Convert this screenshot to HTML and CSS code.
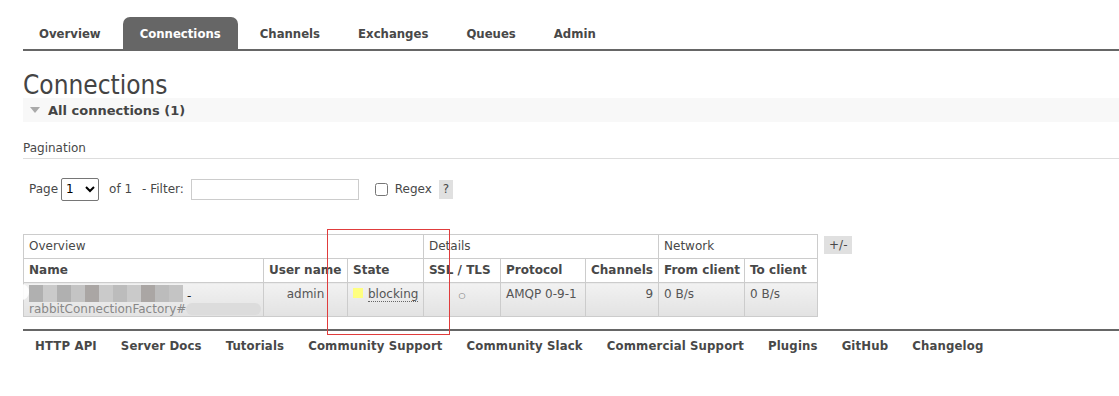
FILE: index.html
```html
<!DOCTYPE html>
<html lang="en">
<head>
  <meta charset="UTF-8">
  <title>RabbitMQ Management</title>
  <link rel="stylesheet" href="styles.css">
</head>
<body>

  <div class="page">
    <ul class="tabs">
      <li><a href="#">Overview</a></li>
      <li class="active"><a href="#">Connections</a></li>
      <li><a href="#">Channels</a></li>
      <li><a href="#">Exchanges</a></li>
      <li><a href="#">Queues</a></li>
      <li><a href="#">Admin</a></li>
    </ul>

    <h1>Connections</h1>

    <div class="section-head">
      <span class="arrow"></span>
      <h2>All connections (1)</h2>
    </div>

    <h3 class="pagination-title">Pagination</h3>

    <div class="filter-row">
      <label>Page</label>
      <select class="page-select"><option>1</option></select>
      <span class="of">of 1</span>
      <label>- Filter:</label>
      <input type="text" class="filter-input">
      <input type="checkbox" class="regex-box">
      <label>Regex</label>
      <span class="help">?</span>
    </div>

    <div class="table-wrap">
      <table class="list">
        <colgroup>
          <col class="c-name">
          <col class="c-user">
          <col class="c-state">
          <col class="c-ssl">
          <col class="c-proto">
          <col class="c-chan">
          <col class="c-from">
          <col class="c-to">
        </colgroup>
        <thead>
          <tr class="group">
            <th colspan="3">Overview</th>
            <th colspan="3">Details</th>
            <th colspan="2">Network</th>
          </tr>
          <tr>
            <th>Name</th>
            <th>User name</th>
            <th>State</th>
            <th>SSL / TLS</th>
            <th>Protocol</th>
            <th>Channels</th>
            <th>From client</th>
            <th>To client</th>
          </tr>
        </thead>
        <tbody>
          <tr>
            <td>
              <div class="mosaic">
                <i class="m1"></i><i class="m2"></i><i class="m1"></i><i class="m3"></i><i class="m4"></i><i class="m2"></i><i class="m5"></i><i class="m2"></i><i class="m4"></i><i class="m5"></i><i class="m3"></i><span class="dash">-</span>
              </div>
              <div class="sub">rabbitConnectionFactory#<span class="smudge"></span></div>
            </td>
            <td class="center">admin</td>
            <td><span class="state-dot"></span><abbr>blocking</abbr></td>
            <td class="center"><span class="ssl">&#9675;</span></td>
            <td>AMQP 0-9-1</td>
            <td class="right">9</td>
            <td>0 B/s</td>
            <td>0 B/s</td>
          </tr>
        </tbody>
      </table>
      <span class="toggle">+/-</span>
      <div class="highlight"></div>
      <div class="blur-edge"></div>
    </div>

    <ul class="footer">
      <li><a href="#">HTTP API</a></li>
      <li><a href="#">Server Docs</a></li>
      <li><a href="#">Tutorials</a></li>
      <li><a href="#">Community Support</a></li>
      <li><a href="#">Community Slack</a></li>
      <li><a href="#">Commercial Support</a></li>
      <li><a href="#">Plugins</a></li>
      <li><a href="#">GitHub</a></li>
      <li><a href="#">Changelog</a></li>
    </ul>
  </div>

</body>
</html>
```

FILE: styles.css
```css
body {
  margin: 0;
  padding: 0;
  font-family: 'DejaVu Sans', Verdana, sans-serif;
  font-size: 12px;
  color: #484848;
  background: #fff;
}

a {
  color: inherit;
  text-decoration: none;
}

.page {
  padding: 17px 0 0 23px;
}

/* tabs */
.tabs {
  display: flex;
  gap: 6px;
  list-style: none;
  margin: 0;
  padding: 0;
  border-bottom: 2px solid #666;
}

.tabs li a {
  display: block;
  height: 32px;
  line-height: 33px;
  padding: 0 16px;
  font-family: 'DejaVu Sans Condensed', 'DejaVu Sans', sans-serif;
  font-weight: bold;
  font-size: 13px;
  color: #484848;
  border-radius: 7px 7px 0 0;
}

.tabs li.active a {
  background: #666;
  color: #fff;
  padding: 0 17px;
}

h1 {
  margin: 21px 0 0 0;
  font-family: 'DejaVu Sans Condensed', 'DejaVu Sans', sans-serif;
  font-weight: normal;
  font-size: 26px;
  line-height: 27px;
  color: #444;
}

.section-head {
  display: flex;
  align-items: center;
  height: 24px;
  margin-top: -1px;
  background: #f8f8f8;
  padding-left: 7px;
}

.arrow {
  width: 0;
  height: 0;
  border-left: 5px solid transparent;
  border-right: 5px solid transparent;
  border-top: 6px solid #aaa;
  margin-right: 8px;
}

h2 {
  margin: 0;
  font-size: 13px;
  font-weight: bold;
  color: #444;
}

.pagination-title {
  margin: 19px 0 0 0;
  padding-bottom: 3px;
  font-size: 12px;
  font-weight: normal;
  color: #484848;
  border-bottom: 1px solid #ddd;
}

.filter-row {
  display: flex;
  align-items: center;
  height: 24px;
  margin: 18px 0 0 6px;
  font-size: 12px;
}

.page-select {
  width: 38px;
  height: 23px;
  margin: 0 10px 0 3px;
  font-family: 'DejaVu Sans', sans-serif;
  font-size: 12px;
  border: 1px solid #767676;
  border-radius: 2px;
  background: #fff;
}

.of {
  margin-right: 10px;
}

.filter-input {
  width: 164px;
  height: 17px;
  margin-left: 7px;
  border: 1px solid #ccc;
  padding: 1px;
}

.regex-box {
  width: 13px;
  height: 13px;
  margin: 0 7px 0 16px;
}

.help {
  display: inline-block;
  width: 14px;
  height: 19px;
  line-height: 19px;
  margin-left: 7px;
  text-align: center;
  background: #e0e0e0;
  color: #484848;
}

/* table */
.table-wrap {
  position: relative;
  display: flex;
  align-items: flex-start;
  gap: 6px;
  margin-top: 33px;
}

.list {
  table-layout: fixed;
  width: 794px;
  border-collapse: collapse;
  font-size: 12px;
}

.list th,
.list td {
  border: 1px solid #ccc;
  padding: 0 5px;
  text-align: left;
  vertical-align: top;
  white-space: nowrap;
  overflow: hidden;
}

.list th {
  height: 23px;
  line-height: 23px;
}

.list tr.group th {
  font-weight: normal;
}

.list tbody td {
  height: 32px;
  line-height: 20px;
  padding-top: 1px;
  background: linear-gradient(#f2f2f2, #e2e2e2);
  color: #555;
}

.c-name { width: 240px; }
.c-user { width: 84px; }
.c-state { width: 76px; }
.c-ssl { width: 77px; }
.c-proto { width: 85px; }
.c-chan { width: 73px; }
.c-from { width: 86px; }
.c-to { width: 73px; }

.center { text-align: center !important; }
.right { text-align: right !important; }

.ssl {
  font-size: 8px;
  color: #666;
}

.mosaic {
  display: flex;
  align-items: flex-end;
  height: 17px;
  margin-top: 1px;
}

.mosaic i {
  display: block;
  width: 14px;
  height: 17px;
}

.m1 { background: #b0b0b0; }
.m2 { background: #cacaca; }
.m3 { background: #c4c4c4; }
.m4 { background: #aaa6a4; }
.m5 { background: #bcbcbc; }

.dash {
  margin-left: 4px;
  line-height: 12px;
  color: #222;
}

.sub {
  line-height: 14px;
  color: #888;
}

.smudge {
  display: inline-block;
  width: 75px;
  height: 12px;
  vertical-align: -2px;
  border-radius: 6px;
  background: #dcdcdc;
}

.state-dot {
  display: inline-block;
  width: 10px;
  height: 10px;
  margin-right: 5px;
  background: #ffff80;
}

abbr {
  text-decoration: none;
  border-bottom: 1px dotted #666;
}

.toggle {
  display: inline-block;
  margin-top: 2px;
  padding: 0 5px;
  height: 18px;
  line-height: 18px;
  background: #e0e0e0;
  font-size: 12px;
}

.highlight {
  position: absolute;
  left: 304px;
  top: -5px;
  width: 121px;
  height: 104px;
  border: 1px solid #e03c3c;
}

.blur-edge {
  position: absolute;
  left: -9px;
  top: 50px;
  width: 15px;
  height: 16px;
  border-radius: 8px;
  background: rgba(255, 255, 255, 0.9);
}

/* footer */
.footer {
  display: flex;
  gap: 24px;
  list-style: none;
  margin: 12px 0 0 0;
  padding: 7px 0 0 12px;
  border-top: 2px solid #666;
}

.footer li a {
  font-family: 'DejaVu Sans Condensed', 'DejaVu Sans', sans-serif;
  font-weight: bold;
  font-size: 13px;
  letter-spacing: 0.15px;
  color: #484848;
}
```
